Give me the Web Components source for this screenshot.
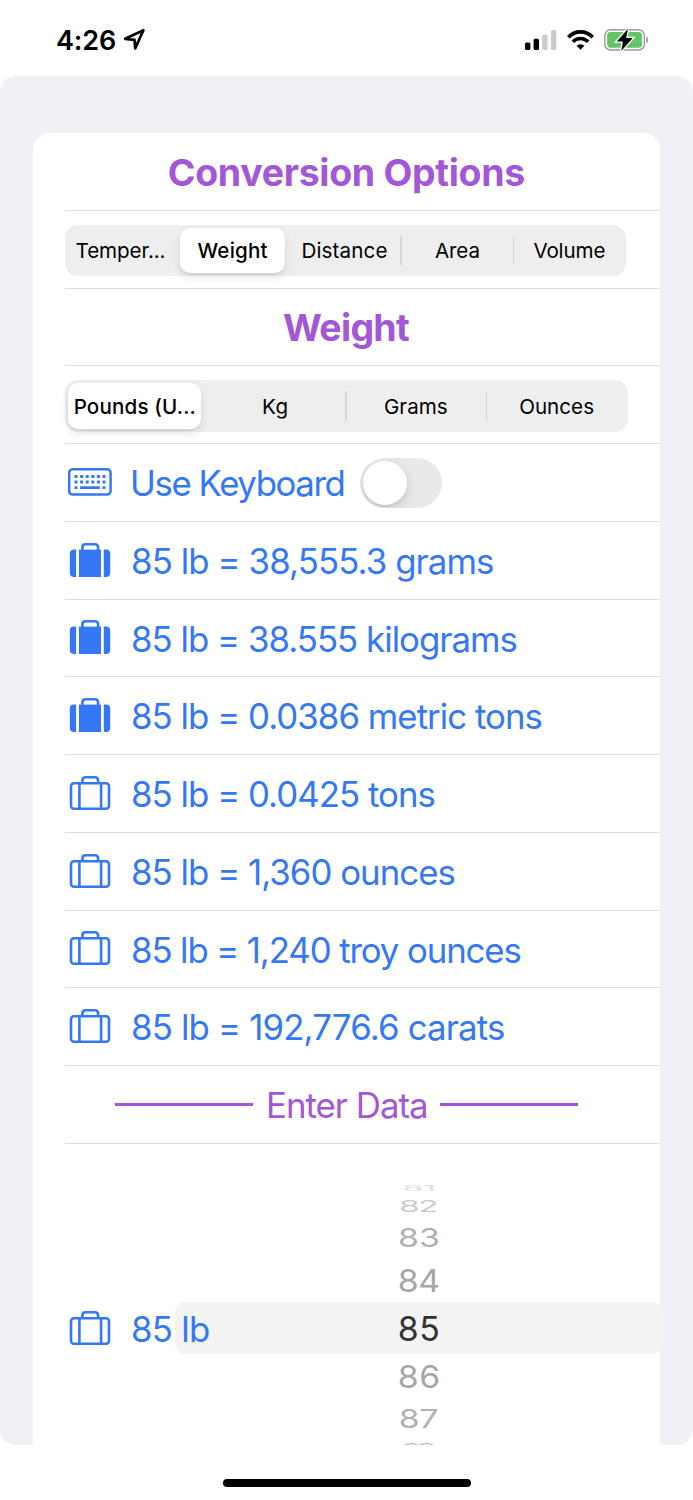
<!DOCTYPE html>
<html lang="en">
<head>
<meta charset="utf-8">
<title>Conversion Options</title>
<style>
html, body{
    margin: 0;
    height: 1500px;
    background-color: #fff;
    font-family: Inter, "Liberation Sans", sans-serif;
    overflow: hidden;
}
</style>
</head>
<body>
<phone-screen>
    <status-bar slot="status" data-time="4:26"></status-bar>
    <list-row><row-heading data-text="Conversion Options" data-width="355.5"></row-heading></list-row>
    <list-row>
        <segmented-control data-labels="Temper...|Weight|Distance|Area|Volume" data-widths="89|70|84|43.5|71" data-selected="1" style="width:561px"></segmented-control>
    </list-row>
    <list-row><row-heading data-text="Weight" data-width="127"></row-heading></list-row>
    <list-row>
        <segmented-control data-labels="Pounds (U...|Kg|Grams|Ounces" data-widths="120|24.5|62|73" data-selected="0" style="width:563px"></segmented-control>
    </list-row>
    <list-row>
        <icon-label data-icon="keyboard" data-text="Use Keyboard" data-width="210.5"></icon-label>
        <toggle-switch></toggle-switch>
    </list-row>
    <list-row><icon-label data-icon="suitcase-fill" data-text="85 lb = 38,555.3 grams" data-width="360"></icon-label></list-row>
    <list-row><icon-label data-icon="suitcase-fill" data-text="85 lb = 38.555 kilograms" data-width="383.5"></icon-label></list-row>
    <list-row><icon-label data-icon="suitcase-fill" data-text="85 lb = 0.0386 metric tons" data-width="408.5"></icon-label></list-row>
    <list-row><icon-label data-icon="suitcase" data-text="85 lb = 0.0425 tons" data-width="301.5"></icon-label></list-row>
    <list-row><icon-label data-icon="suitcase" data-text="85 lb = 1,360 ounces" data-width="321.5"></icon-label></list-row>
    <list-row><icon-label data-icon="suitcase" data-text="85 lb = 1,240 troy ounces" data-width="387.5"></icon-label></list-row>
    <list-row><icon-label data-icon="suitcase" data-text="85 lb = 192,776.6 carats" data-width="371"></icon-label></list-row>
    <list-row><line-title data-text="Enter Data" data-width="157"></line-title></list-row>
    <picker-row>
        <icon-label data-icon="suitcase" data-text="85 lb" data-width="76"></icon-label>
        <number-wheel slot="wheel" data-value="85"></number-wheel>
    </picker-row>
</phone-screen>

<script>
const icons = {
    "keyboard": `
<svg width="44" height="28" viewBox="0 0 44 28" fill="none" stroke="#3478f6">
<rect x="1.2" y="1.2" width="41.4" height="25.4" rx="3.6" stroke-width="2.5"/>
<path d="M6.5 8.6H38M6.5 14.1H38" stroke-width="3" stroke-dasharray="3 2.6"/>
<path d="M6.5 19.7H9.5M12.1 19.7H31.9M34.5 19.7H37.5" stroke-width="2.8"/>
</svg>`,
    "suitcase": `
<svg width="42" height="36" viewBox="0 0 42 36" fill="none" stroke="#3478f6" stroke-width="2.6">
<rect x="2" y="8.3" width="38" height="25.4" rx="3"/>
<path d="M10.4 8V34M32.1 8V34"/>
<path d="M13.4 8V5.4Q13.4 2.2 16.6 2.2H25.9Q29.1 2.2 29.1 5.4V8"/>
</svg>`,
    "suitcase-fill": `
<svg width="42" height="36" viewBox="0 0 42 36" fill="#3478f6">
<path d="M7.1 7.6V35H5Q.8 35 .8 30.8V11.8Q.8 7.6 5 7.6Z"/>
<path d="M34.8 7.6V35H37Q41.2 35 41.2 30.8V11.8Q41.2 7.6 37 7.6Z"/>
<rect x="9.9" y="7.6" width="22.1" height="27.4"/>
<path d="M13.4 8V5.4Q13.4 2.2 16.6 2.2H25.9Q29.1 2.2 29.1 5.4V8" fill="none" stroke="#3478f6" stroke-width="2.6"/>
</svg>`
};

// text spaced out so that its ink is exactly data-width pixels wide
const pen = document.createElement("canvas").getContext("2d");
class TrackedText extends HTMLElement{
    constructor(){
        super();
        this.attachShadow({mode:"open"});
    }
    connectedCallback(){
        const text = this.getAttribute('data-text');
        const width = Number(this.getAttribute('data-width'));
        const style = getComputedStyle(this);
        pen.font = `${style.fontWeight} ${style.fontSize} ${style.fontFamily}`;
        const m = pen.measureText(text);
        const ink = m.actualBoundingBoxLeft + m.actualBoundingBoxRight;
        const spacing = (width - ink) / (text.length - 1);
        this.shadowRoot.innerHTML = `
<style>
:host{ display: block; flex: none; width: ${width}px; white-space: nowrap; line-height: 1.2; }
span{ display: block; margin-left: ${m.actualBoundingBoxLeft}px; letter-spacing: ${spacing}px; }
</style>
<span>${text}</span>`;
    }
}
customElements.define('tracked-text', TrackedText);

class PhoneScreen extends HTMLElement{
    constructor(){
        super();
        this.attachShadow({mode:"open"}).innerHTML = `
<style>
:host{ display: flex; flex-direction: column; align-items: center; width: 693px; height: 1500px; }
.status{ height: 76px; width: 100%; }
main{
    box-sizing: border-box;
    width: 100%;
    height: 1368.5px;
    padding: 57px 33px 0;
    border-radius: 16px;
    background-color: #f1f0f6;
    overflow: hidden;
}
section{ height: 1400px; border-radius: 17px; background-color: #fff; overflow: hidden; }
.home{ width: 248px; height: 8.5px; margin-top: 34px; border-radius: 5px; background-color: #000; }
</style>
<div class="status"><slot name="status"></slot></div>
<main><section><slot></slot></section></main>
<div class="home"></div>`;
    }
}
customElements.define('phone-screen', PhoneScreen);

class StatusBar extends HTMLElement{
    constructor(){
        super();
        this.attachShadow({mode:"open"});
    }
    connectedCallback(){
        this.shadowRoot.innerHTML = `
<style>
:host{ display: flex; align-items: center; height: 79px; padding: 0 44px 0 57px; font-size: 27px; font-weight: 600; }
svg{ display: block; flex: none; }
tracked-text{ padding-top: 3px; }
.arrow{ margin: -1px 0 0 8px; }
.signal{ margin-left: auto; }
.wifi{ margin-left: 10px; }
.battery{ margin-left: 10px; }
</style>
<tracked-text data-text="${this.getAttribute('data-time')}" data-width="58"></tracked-text>
<svg class="arrow" width="24" height="24" viewBox="0 0 24 24" fill="none" stroke="#000" stroke-width="2.7" stroke-linejoin="round"><path d="M20.4 3.2L2.2 11.8L11.5 12.9L12.2 21.4Z"/></svg>
<svg class="signal" width="32" height="22" viewBox="0 0 32 22">
<rect x="0" y="13.5" width="5.4" height="7.5" rx="1.5"/><rect x="8.6" y="9.7" width="5.4" height="11.3" rx="1.5"/>
<g fill="#cbcbcb"><rect x="17.2" y="5.4" width="5.4" height="15.6" rx="1.5"/><rect x="25.9" y="1" width="5.4" height="20" rx="1.5"/></g></svg>
<svg class="wifi" width="27" height="22" viewBox="0 0 27 22" fill="none" stroke="#000">
<path d="M1.3 8.2C8 1.1 19 1.1 25.7 8.2" stroke-width="3.7"/><path d="M5.8 12.8C10.2 8.4 16.8 8.4 21.2 12.8" stroke-width="3.6"/>
<path d="M9.6 16.7C11.9 14.6 15.1 14.6 17.4 16.7L13.5 20.7Z" fill="#000" stroke="none"/></svg>
<svg class="battery" width="45" height="24" viewBox="0 0 45 24">
<rect x=".8" y="1.8" width="39.6" height="20.2" rx="5.8" fill="none" stroke="#999" stroke-width="1.4"/>
<path d="M42.3 8.6Q44.3 9.4 44.3 12T42.3 15.4Z" fill="#999"/>
<rect x="3.1" y="4.1" width="35" height="15.6" rx="3.7" fill="#65c466"/>
<path d="M24 .8L12.8 13.4H18.9L17.3 22.9L28.8 10H22.2Z" stroke="#fff" stroke-width="2.6" paint-order="stroke"/></svg>`;
    }
}
customElements.define('status-bar', StatusBar);

class ListRow extends HTMLElement{
    constructor(){
        super();
        this.attachShadow({mode:"open"}).innerHTML = `
<style>
:host{
    display: flex;
    align-items: center;
    box-sizing: border-box;
    height: 77.75px;
    margin-left: 32px;
    padding: 2px 32px 0 0;
    border-bottom: 1px solid #dddddf;
}
</style>
<slot></slot>`;
    }
}
customElements.define('list-row', ListRow);

class RowHeading extends HTMLElement{
    constructor(){
        super();
        this.attachShadow({mode:"open"});
    }
    connectedCallback(){
        this.shadowRoot.innerHTML = `
<style>
:host{ display: flex; flex: 1; justify-content: center; color: #a357d7; font-size: 37.5px; font-weight: 700; }
</style>
<tracked-text data-text="${this.getAttribute('data-text')}" data-width="${this.getAttribute('data-width')}"></tracked-text>`;
    }
}
customElements.define('row-heading', RowHeading);

class SegmentedControl extends HTMLElement{
    constructor(){
        super();
        this.attachShadow({mode:"open"});
    }
    connectedCallback(){
        const labels = this.getAttribute('data-labels').split("|");
        const widths = this.getAttribute('data-widths').split("|");
        const selected = Number(this.getAttribute('data-selected'));
        const segments = labels.map((label, i) => {
            const kind = i === selected ? "on" : (i > 0 && i - 1 !== selected ? "ruled" : "");
            return `<div class="${kind}"><tracked-text data-text="${label}" data-width="${widths[i]}"></tracked-text></div>`;
        });
        this.shadowRoot.innerHTML = `
<style>
:host{
    display: grid;
    grid-template-columns: repeat(${labels.length}, 1fr);
    box-sizing: border-box;
    height: 51.5px;
    margin-top: 1px;
    border-radius: 13px;
    background-color: #eeeeee;
    font-size: 20.6px;
}
div{ position: relative; display: flex; align-items: center; justify-content: center; }
tracked-text{ padding: 2px 2px 0 0; }
.on tracked-text{ padding-right: 0; }
.on{
    margin: 3px 4.5px 3px 3px;
    border-radius: 10px;
    background-color: #fff;
    box-shadow: 0 4px 9px rgba(0,0,0,.11), 0 2px 2px rgba(0,0,0,.04);
    font-weight: 500;
}
.ruled::before{ content: ""; position: absolute; left: -1.2px; top: 11px; bottom: 11px; width: 1.4px; background-color: #d6d6d8; }
</style>
${segments.join("")}`;
    }
}
customElements.define('segmented-control', SegmentedControl);

class IconLabel extends HTMLElement{
    constructor(){
        super();
        this.attachShadow({mode:"open"});
    }
    connectedCallback(){
        this.shadowRoot.innerHTML = `
<style>
:host{ display: flex; align-items: center; color: #3478f6; font-size: 34.8px; }
.icon{ display: flex; flex: none; justify-content: center; width: 50px; margin-right: 18px; }
svg{ display: block; flex: none; margin-top: -3px; }
tracked-text{ padding-top: 1px; }
</style>
<div class="icon">${icons[this.getAttribute('data-icon')]}</div>
<tracked-text data-text="${this.getAttribute('data-text')}" data-width="${this.getAttribute('data-width')}"></tracked-text>`;
    }
}
customElements.define('icon-label', IconLabel);

class ToggleSwitch extends HTMLElement{
    constructor(){
        super();
        this.attachShadow({mode:"open"}).innerHTML = `
<style>
:host{
    display: block;
    box-sizing: border-box;
    width: 82px;
    height: 50px;
    margin-left: 16px;
    padding: 3px;
    border-radius: 25px;
    background-color: #e9e9ea;
    overflow: hidden;
}
div{ width: 44px; height: 44px; border-radius: 50%; background-color: #fff; box-shadow: 0 4px 11px rgba(0,0,0,.15), 0 2px 2px rgba(0,0,0,.04); }
</style>
<div></div>`;
    }
}
customElements.define('toggle-switch', ToggleSwitch);

class LineTitle extends HTMLElement{
    constructor(){
        super();
        this.attachShadow({mode:"open"});
    }
    connectedCallback(){
        this.shadowRoot.innerHTML = `
<style>
:host{ display: flex; flex: 1; align-items: center; justify-content: center; color: #a357d7; font-size: 34.8px; }
hr{ width: 138px; height: 3px; margin: -2px 0 0; border: 0; background-color: #a357d7; }
tracked-text{ margin: 0 14px 0 16px; }
</style>
<hr>
<tracked-text data-text="${this.getAttribute('data-text')}" data-width="${this.getAttribute('data-width')}"></tracked-text>
<hr>`;
    }
}
customElements.define('line-title', LineTitle);

class PickerRow extends HTMLElement{
    constructor(){
        super();
        this.attachShadow({mode:"open"}).innerHTML = `
<style>
:host{ display: grid; grid-template-columns: 110px 487px; margin-left: 32px; }
.label{ z-index: 1; padding-top: 164px; }
</style>
<div class="label"><slot></slot></div>
<slot name="wheel"></slot>`;
    }
}
customElements.define('picker-row', PickerRow);

class NumberWheel extends HTMLElement{
    constructor(){
        super();
        this.attachShadow({mode:"open"});
    }
    connectedCallback(){
        const value = Number(this.getAttribute('data-value'));
        // offset, slot height, vertical squash, ink width, colour, drop
        const faces = [
            [-4, 12.8, .22, 29, "#dedede", 0],
            [-3, 22.4, .49, 36, "#cbcbcb", 0],
            [-2, 40.6, .76, 38, "#b0b0b0", .5],
            [-1, 44.4, .92, 38.5, "#a6a6a6", .5],
            [0, 51.6, 1, 38.5, "#333333", 1],
            [1, 44.4, .92, 38.5, "#a6a6a6", 1],
            [2, 40.6, .76, 36.5, "#b0b0b0", 1],
            [3, 22.4, .49, 32, "#c4c4c4", -.8]
        ];
        this.shadowRoot.innerHTML = `
<style>
:host{ display: block; padding-top: 38.2px; font-size: 33.8px; }
div{ display: flex; align-items: center; justify-content: center; }
.on{ border-radius: 11px; background-color: #f3f3f3; }
</style>
${faces.map(([offset, height, squash, width, color, drop]) => `<div class="${offset ? "" : "on"}" style="height:${height}px; color:${color}"><tracked-text data-text="${value + offset}" data-width="${width}" style="transform:translate(.5px, ${drop}px) scaleY(${squash})"></tracked-text></div>`).join("")}`;
    }
}
customElements.define('number-wheel', NumberWheel);
</script>
</body>
</html>
